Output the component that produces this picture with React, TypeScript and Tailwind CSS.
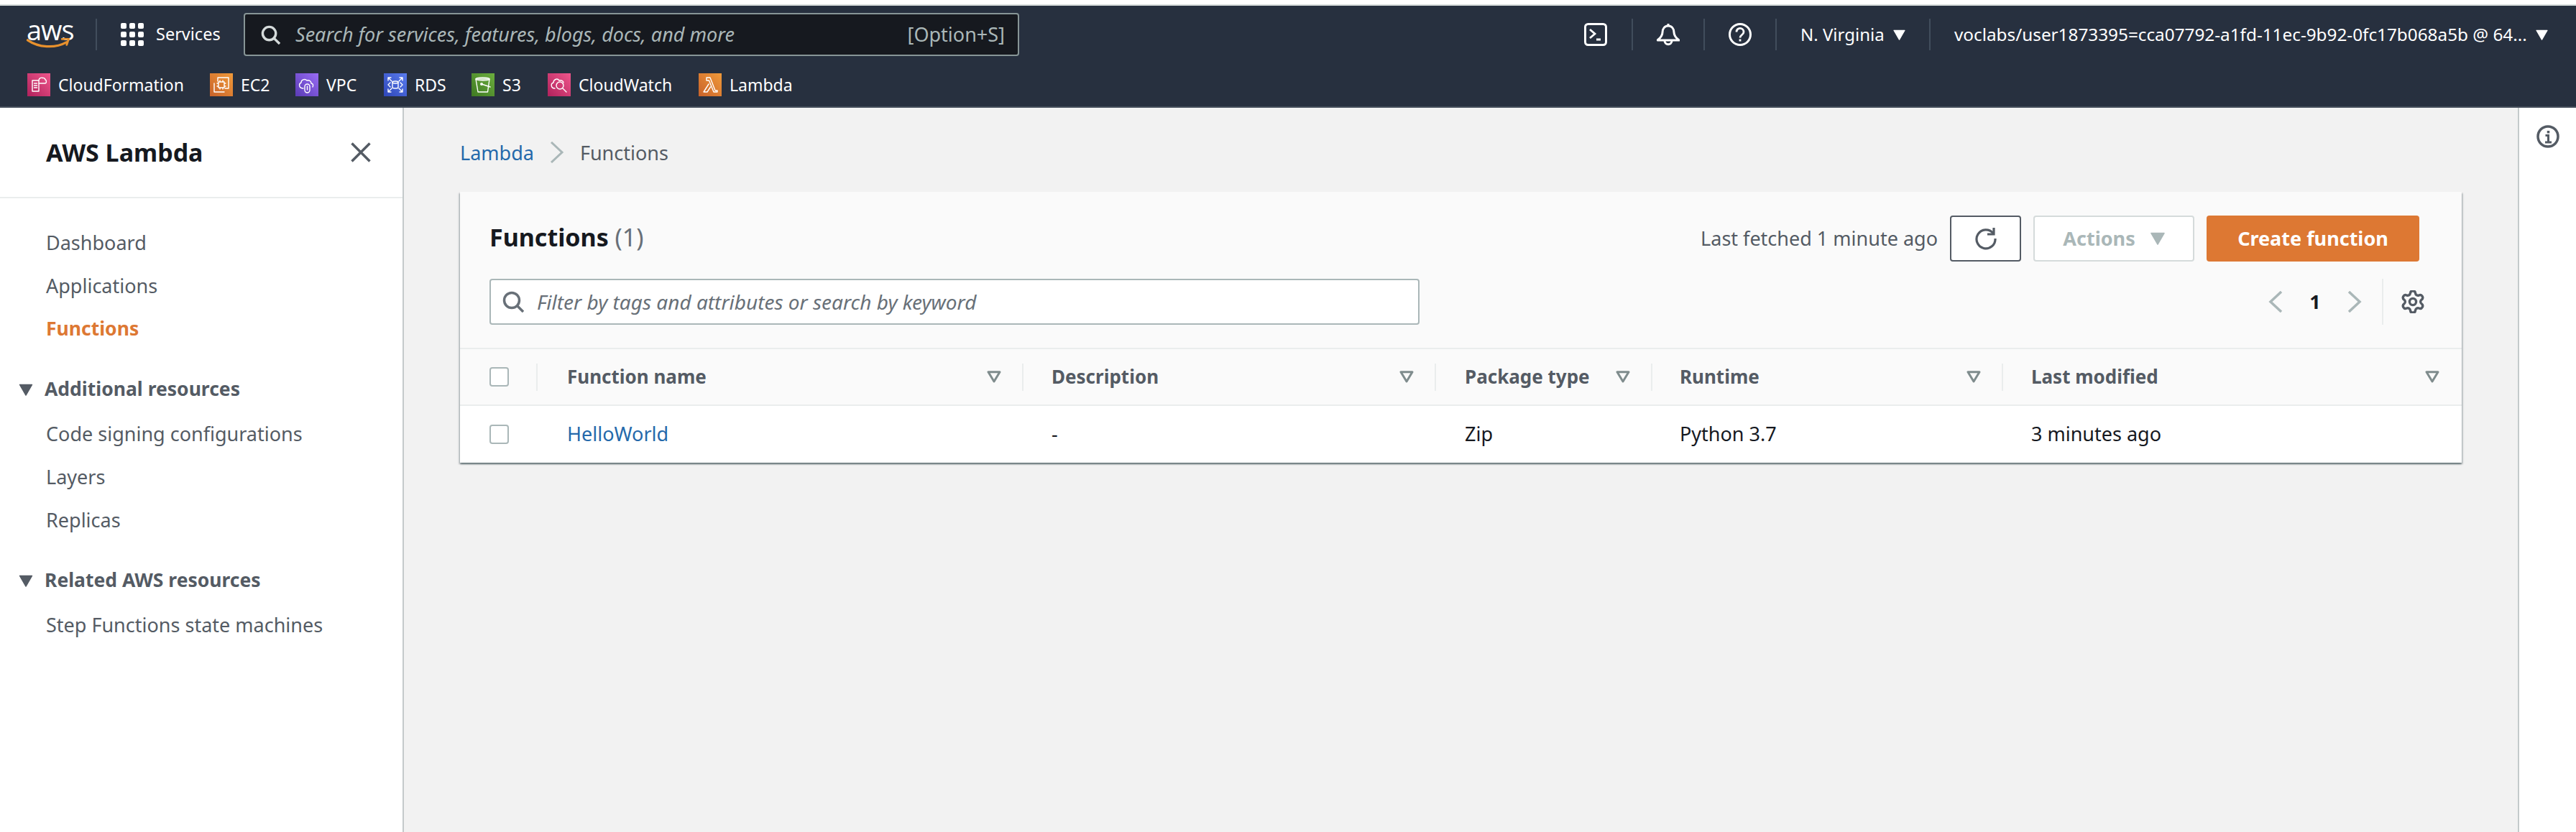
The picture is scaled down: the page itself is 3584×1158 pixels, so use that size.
import React from "react";
import { Settings } from "lucide-react";

const Caret = ({ className = "" }: { className?: string }) => (
  <svg viewBox="0 0 20 18" className={className}>
    <path d="M1 1.5h18L10 17z" fill="currentColor" stroke="currentColor" strokeWidth="1.5" strokeLinejoin="round" />
  </svg>
);

const Sort = () => (
  <svg viewBox="0 0 20 17" className="w-[20px] h-[17px] shrink-0 text-[#7f8c8d]">
    <path d="M2 1.7h16L10 15z" fill="none" stroke="currentColor" strokeWidth="3" strokeLinejoin="round" />
  </svg>
);

const Tile = ({ className, children }: { className: string; children: React.ReactNode }) => (
  <span className={`w-[32px] h-[32px] shrink-0 flex items-center justify-center ${className}`}>
    <svg viewBox="0 0 32 32" className="w-[32px] h-[32px]" fill="none" stroke="#fff" strokeWidth="1.4" strokeLinecap="round" strokeLinejoin="round">
      {children}
    </svg>
  </span>
);

const shortcuts: { label: string; tile: React.ReactNode; width: string }[] = [
  {
    label: "CloudFormation",
    width: "w-[254px]",
    tile: (
      <Tile className="bg-linear-to-tr from-[#b0205c] to-[#f0568c]">
        <path d="M7 10h9v15H7zM9.5 14h4M9.5 17h4M9.5 20h4" />
        <path d="M16 9.5c.5-2.5 3-4 5.5-3 1-.5 3.500.5 3.500 2.500 2 .5 2 5-.5 5H16" />
      </Tile>
    ),
  },
  {
    label: "EC2",
    width: "w-[119px]",
    tile: (
      <Tile className="bg-linear-to-tr from-[#c8622a] to-[#f09a3a]">
        <path d="M11 11V6h15v15h-5M6 14v12h14" />
        <path d="M12 12h8v8h-8zM14 10v2M18 10v2M14 20v2M18 20v2M10 14h2M10 18h2M20 14h2M20 18h2" />
      </Tile>
    ),
  },
  {
    label: "VPC",
    width: "w-[123px]",
    tile: (
      <Tile className="bg-linear-to-tr from-[#5a3bb5] to-[#9a6cf5]">
        <path d="M11 21c-6 0-7-6-3-8 0-4 5-6 8-3 3-1 6 1 6 4 3 .5 3 3 2 5" />
        <rect x="13" y="15" width="7" height="12" rx="3.500" />
        <path d="M16.500 18v5" />
      </Tile>
    ),
  },
  {
    label: "RDS",
    width: "w-[122px]",
    tile: (
      <Tile className="bg-linear-to-tr from-[#2f46b8] to-[#5a7cf0]">
        <path d="M6 10V6h4M22 6h4v4M6 22v4h4M26 22v4h-4M6 6l5 5M26 6l-5 5M6 26l5-5M26 26l-5-5" />
        <ellipse cx="16" cy="12.500" rx="4" ry="1.500" />
        <path d="M12 12.500v7c0 2 8 2 8 0v-7M9 13l-3 3 3 3M23 13l3 3-3 3" />
      </Tile>
    ),
  },
  {
    label: "S3",
    width: "w-[106px]",
    tile: (
      <Tile className="bg-linear-to-tr from-[#3f7a22] to-[#6cae3e]">
        <path d="M6 8h19l-2.500 18H9z" />
        <ellipse cx="15.500" cy="8" rx="9.500" ry="2" />
        <path d="M14 15l12 4" />
        <circle cx="14" cy="15" r="1.300" />
      </Tile>
    ),
  },
  {
    label: "CloudWatch",
    width: "w-[210px]",
    tile: (
      <Tile className="bg-linear-to-tr from-[#b0205c] to-[#f0568c]">
        <path d="M10 21c-6 0-6-7-2-8 0-4 5-7 8-3 3-1 6 1 6 3" />
        <circle cx="17" cy="17" r="5" />
        <path d="M21 21l5 5" />
      </Tile>
    ),
  },
  {
    label: "Lambda",
    width: "",
    tile: (
      <Tile className="bg-linear-to-tr from-[#c8622a] to-[#f09a3a]">
        <path d="M11 6h5l7 18h3v2h-5L14.500 10H11zM14 15L7 26h5l4.500-7" />
      </Tile>
    ),
  },
];

const columns = [
  { head: "Function name", cell: "HelloWorld", link: true, cls: "w-[676px] pl-[41px]" },
  { head: "Description", cell: "-", link: false, cls: "w-[574px] pl-[39px]" },
  { head: "Package type", cell: "Zip", link: false, cls: "w-[301px] pl-[40px]" },
  { head: "Runtime", cell: "Python 3.7", link: false, cls: "w-[488px] pl-[38px]" },
];

const Box = () => <span className="w-[27px] h-[27px] rounded-[4px] border-2 border-[#aab7b8] bg-white block" />;

const NavItem = ({ children, className = "" }: { children: React.ReactNode; className?: string }) => (
  <div className={`h-[60px] flex items-center pl-[64px] text-[27px] text-[#545b64] ${className}`}>{children}</div>
);

const Group = ({ children, className = "" }: { children: React.ReactNode; className?: string }) => (
  <div className={`h-[60px] flex items-center pl-[26px] gap-[16px] text-[26.5px] font-bold text-[#545b64] ${className}`}>
    <Caret className="w-[20px] h-[17px]" />
    {children}
  </div>
);

export default function App() {
  return (
    <div className="w-[3584px] h-[1158px] overflow-hidden bg-[#f2f2f2] flex flex-col font-['Noto_Sans','Open_Sans',sans-serif] text-[27px] text-[#16191f]">
      <div className="h-[6px] bg-white" />
      <div className="h-[2px] bg-[#d5dbdb]" />
      <header className="h-[142px] bg-[#27303f] border-b-2 border-[#464f5c] text-white text-[24px] shrink-0">
        <div className="h-[80px] flex items-center pl-[36px]">
          <div className="w-[63px] h-[40px] relative shrink-0">
            <span className="absolute left-[1px] -top-[9px] text-[38px] leading-[44px] tracking-[-1px] font-['Open_Sans',sans-serif]">aws</span>
            <svg viewBox="0 0 64 16" className="absolute left-0 bottom-0 w-[63px] h-[15px]">
              <path d="M1 3c16 11 40 13 58 3" fill="none" stroke="#e8912d" strokeWidth="3.500" strokeLinecap="round" />
              <path d="M52 1.500l10-.5-3 9" fill="none" stroke="#e8912d" strokeWidth="3" strokeLinecap="round" strokeLinejoin="round" />
            </svg>
          </div>
          <span className="w-[2px] h-[44px] bg-[#414d5c] ml-[34px] mr-[33px]" />
          <div className="w-[171px] flex items-center gap-[17px] shrink-0">
            <svg viewBox="0 0 32 32" className="w-[32px] h-[32px] shrink-0" fill="#fff">
              {[0, 12, 24].map((y) =>
                [0, 12, 24].map((x) => <rect key={`${x}-${y}`} x={x} y={y} width="8" height="8" rx="2" />)
              )}
            </svg>
            <span className="text-[23.5px]">Services</span>
          </div>
          <div className="w-[1079px] h-[60px] bg-[#16191f] border-2 border-[#879596] rounded-[4px] flex items-center pl-[22px] pr-[18px] shrink-0 text-[27px]">
            <svg viewBox="0 0 28 28" className="w-[27px] h-[27px] shrink-0" fill="none" stroke="#d5dbdb" strokeWidth="3.500">
              <circle cx="12" cy="12" r="9.500" />
              <path d="M19 19l8 8" />
            </svg>
            <span className="ml-[21px] italic text-[#aab7b8]">Search for services, features, blogs, docs, and more</span>
            <span className="ml-auto text-[#aab7b8]">[Option+S]</span>
          </div>
          <div className="ml-auto w-[1414px] flex items-center shrink-0 h-[44px]">
            <div className="w-[100px] flex justify-center">
              <svg viewBox="0 0 32 32" className="w-[32px] h-[32px]" fill="none" stroke="#fff" strokeWidth="3">
                <rect x="1.500" y="1.500" width="29" height="29" rx="4" />
                <path d="M8 9l7 6-7 6M17 23h6" strokeWidth="2.800" />
              </svg>
            </div>
            <span className="w-[2px] h-[44px] bg-[#414d5c]" />
            <div className="w-[98px] flex justify-center">
              <svg viewBox="0 0 32 32" className="w-[32px] h-[32px]" fill="none" stroke="#fff" strokeWidth="3" strokeLinejoin="round">
                <path d="M16 1v3" />
                <path d="M16 4c-5 0-8 4-8 9 0 4-3 8-7 11h30c-4-3-7-7-7-11 0-5-3-9-8-9z" />
                <path d="M11 24.500c0 7 10 7 10 0" />
              </svg>
            </div>
            <span className="w-[2px] h-[44px] bg-[#414d5c]" />
            <div className="w-[98px] flex justify-center">
              <svg viewBox="0 0 32 32" className="w-[32px] h-[32px]" fill="none" stroke="#fff" strokeWidth="3">
                <circle cx="16" cy="16" r="14.500" />
                <path d="M11 12.500c0-7 10-6.500 10 0 0 4-5 4-5 8" strokeWidth="2.800" />
                <path d="M16 22.500v3" strokeWidth="2.800" />
              </svg>
            </div>
            <span className="w-[2px] h-[44px] bg-[#414d5c]" />
            <div className="w-[212px] pl-[33px] flex items-center">
              <span>N. Virginia</span>
              <Caret className="w-[17px] h-[15px] ml-[12px]" />
            </div>
            <span className="w-[2px] h-[44px] bg-[#414d5c]" />
            <div className="pl-[33px] flex items-center whitespace-nowrap">
              <span className="text-[24.3px]">voclabs/user1873395=cca07792-a1fd-11ec-9b92-0fc17b068a5b @ 64...</span>
              <Caret className="w-[17px] h-[15px] ml-[12px]" />
            </div>
          </div>
        </div>
        <div className="h-[60px] flex items-center pl-[38px] text-[23px]">
          {shortcuts.map((s) => (
            <div key={s.label} className={`flex items-center gap-[11px] ${s.width}`}>
              {s.tile}
              <span>{s.label}</span>
            </div>
          ))}
        </div>
      </header>

      <div className="flex-1 flex min-h-0">
        <aside className="w-[562px] bg-white border-r-2 border-[#c4cacb] shrink-0">
          <div className="h-[124px] flex items-center justify-between pl-[64px] pr-[44px] border-b-0">
            <span className="text-[34px] font-bold">AWS Lambda</span>
            <svg viewBox="0 0 28 28" className="w-[28px] h-[28px]" fill="none" stroke="#545b64" strokeWidth="3.500">
              <path d="M1.500 1.500l25 25M26.500 1.500l-25 25" />
            </svg>
          </div>
          <div className="h-[2px] bg-[#eaeded]" />
          <nav className="pt-[32px]">
            <NavItem className="text-[26.5px]">Dashboard</NavItem>
            <NavItem>Applications</NavItem>
            <NavItem className="font-bold !text-[26.5px] !text-[#dd7833]">Functions</NavItem>
            <Group className="mt-[24px]">Additional resources</Group>
            <NavItem className="mt-[2px]">Code signing configurations</NavItem>
            <NavItem>Layers</NavItem>
            <NavItem>Replicas</NavItem>
            <Group className="mt-[24px]">Related AWS resources</Group>
            <NavItem className="mt-[2px]">Step Functions state machines</NavItem>
          </nav>
        </aside>

        <main className="flex-1 pl-[78px]">
          <div className="h-[36px] mt-[44px] flex items-center leading-none">
            <span className="text-[#2469ab]">Lambda</span>
            <svg viewBox="0 0 20 30" className="w-[20px] h-[30px] ml-[22px] mr-[22px]" fill="none" stroke="#aab7b8" strokeWidth="3">
              <path d="M2 1l15 14L2 29" />
            </svg>
            <span className="text-[#545b64]">Functions</span>
          </div>
          <section className="w-[2785px] mt-[37px] bg-white shadow-[0_2px_2px_rgba(0,28,36,0.45),2px_2px_2px_rgba(0,28,36,0.15),-2px_2px_2px_rgba(0,28,36,0.15)]">
            <div className="h-[217px] bg-[#fafafa] pl-[41px] pr-[59px] pt-[33px]">
              <div className="flex items-center justify-between h-[64px]">
                <h2 className="text-[34px] font-bold -mt-[3px]">
                  Functions <span className="font-normal text-[#687078]">(1)</span>
                </h2>
                <div className="flex items-center gap-[17px]">
                  <span className="text-[#545b64]">Last fetched 1 minute ago</span>
                  <div className="w-[99px] h-[64px] bg-white border-2 border-[#545b64] rounded-[4px] flex items-center justify-center">
                    <svg viewBox="0 0 32 32" className="w-[32px] h-[32px]" fill="none" stroke="#545b64" strokeWidth="3.200">
                      <path d="M26 8.500A13 13 0 1 0 29 16" />
                      <path d="M27 1v9h-9" />
                    </svg>
                  </div>
                  <div className="w-[224px] h-[64px] bg-white border-2 border-[#d5dbdb] rounded-[4px] flex items-center justify-center gap-[21px] font-bold text-[#aab7b8]">
                    Actions <Caret className="w-[20px] h-[18px]" />
                  </div>
                  <div className="w-[296px] h-[64px] bg-[#dd7833] rounded-[4px] flex items-center justify-center font-bold text-white">
                    Create function
                  </div>
                </div>
              </div>
              <div className="flex items-center mt-[24px] h-[64px] -mr-[7px]">
                <div className="w-[1294px] h-[64px] bg-white border-2 border-[#aab7b8] rounded-[4px] flex items-center pl-[16px] text-[28px]">
                  <svg viewBox="0 0 30 30" className="w-[30px] h-[30px] shrink-0" fill="none" stroke="#687078" strokeWidth="3.500">
                    <circle cx="13" cy="13" r="10.500" />
                    <path d="M20.500 20.500l8.500 8.500" />
                  </svg>
                  <span className="ml-[18px] italic text-[#687078]">Filter by tags and attributes or search by keyword</span>
                </div>
                <div className="ml-auto flex items-center">
                  <svg viewBox="0 0 20 30" className="w-[20px] h-[30px]" fill="none" stroke="#aab7b8" strokeWidth="3.500">
                    <path d="M18 1L3 15l15 14" />
                  </svg>
                  <span className="w-[12px] mx-[39px] font-bold flex justify-center">1</span>
                  <svg viewBox="0 0 20 30" className="w-[20px] h-[30px]" fill="none" stroke="#aab7b8" strokeWidth="3.500">
                    <path d="M2 1l15 14L2 29" />
                  </svg>
                  <span className="w-[2px] h-[64px] bg-[#eaeded] ml-[28px] mr-[25px]" />
                  <Settings viewBox="1.5 1.5 21 21" size={32} color="#545b64" strokeWidth={2.2} />
                </div>
              </div>
            </div>

            <div className="h-[2px] bg-[#eaeded]" />
            <div className="h-[77px] bg-[#fafafa] flex items-center font-bold text-[26px] text-[#545b64]">
              <div className="w-[108px] pl-[41px] flex items-center justify-between shrink-0">
                <Box />
                <span className="w-[2px] h-[38px] bg-[#eaeded]" />
              </div>
              {columns.map((c) => (
                <div key={c.head} className={`${c.cls} shrink-0 flex items-center`}>
                  <span>{c.head}</span>
                  <span className="ml-auto mr-[29px]"><Sort /></span>
                  <span className="w-[2px] h-[38px] bg-[#eaeded]" />
                </div>
              ))}
              <div className="w-[638px] pl-[39px] pr-[31px] flex items-center justify-between shrink-0">
                <span>Last modified</span>
                <Sort />
              </div>
            </div>
            <div className="h-[2px] bg-[#eaeded]" />
            <div className="h-[79px] bg-white flex items-center">
              <div className="w-[108px] pl-[41px] shrink-0">
                <Box />
              </div>
              {columns.map((c) => (
                <div key={c.head} className={`${c.cls} shrink-0 ${c.link ? "text-[#2469ab]" : ""}`}>
                  {c.cell}
                </div>
              ))}
              <div className="w-[638px] pl-[39px] shrink-0">3 minutes ago</div>
            </div>
          </section>
        </main>

        <aside className="w-[81px] bg-white border-l-2 border-[#c4cacb] shrink-0 flex justify-center pt-[24px] pl-[1px]">
          <svg viewBox="0 0 32 32" className="w-[32px] h-[32px]" fill="none" stroke="#545b64" strokeWidth="3.500">
            <circle cx="16" cy="16" r="14" />
            <path d="M12.500 14.500H16.500V24M12 24h9" strokeWidth="3" />
            <path d="M16.500 8v3.500" strokeWidth="3.500" />
          </svg>
        </aside>
      </div>
    </div>
  );
}
